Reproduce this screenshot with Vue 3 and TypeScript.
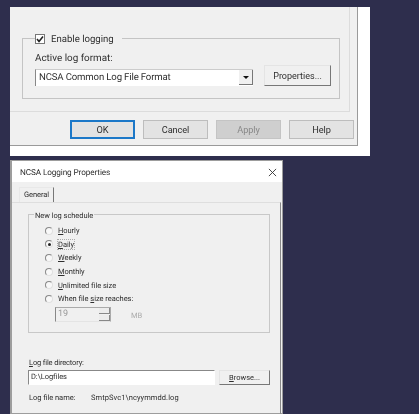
<script setup lang="ts">
interface Option {
  key: string
  rest: string
  lead?: string
  checked?: boolean
}

const schedules: Option[] = [
  { key: 'H', rest: 'ourly' },
  { key: 'D', rest: 'aily', checked: true },
  { key: 'W', rest: 'eekly' },
  { key: 'M', rest: 'onthly' },
  { key: 'U', rest: 'nlimited file size' },
  { lead: 'When file ', key: 's', rest: 'ize reaches:' }
]

const footerButtons = ['OK', 'Cancel', 'Apply', 'Help']
</script>

<template>
  <div class="page">
    <section class="site-panel">
      <div class="site-dialog">
        <div class="tab-page">
          <div class="log-group">
            <label class="enable-row">
              <span class="checkbox">
                <svg viewBox="0 0 10 10" width="10" height="10">
                  <path d="M2 5l2 2.4L8 2.4" fill="none" stroke="#222" stroke-width="1.6" />
                </svg>
              </span>
              Enable logging
            </label>
            <div class="format-label">Active log format:</div>
            <div class="format-row">
              <div class="combo">
                <span>NCSA Common Log File Format</span>
                <span class="combo-arrow"><i></i></span>
              </div>
              <button class="win-btn props-btn">Properties...</button>
            </div>
          </div>
        </div>
        <div class="footer">
          <button
            v-for="b in footerButtons"
            :key="b"
            class="win-btn foot-btn"
            :class="{ primary: b === 'OK', disabled: b === 'Apply' }"
          >{{ b }}</button>
        </div>
      </div>
    </section>

    <section class="props-dialog">
      <header class="title-bar">
        <span>NCSA Logging Properties</span>
        <svg viewBox="0 0 10 10" width="9" height="9">
          <path d="M1 1l8 8M9 1l-8 8" stroke="#333" stroke-width="1" fill="none" />
        </svg>
      </header>
      <div class="dialog-body">
        <div class="tabs"><span class="tab">General</span></div>
        <div class="general-page">
          <div class="schedule-group">
            <span class="legend">New log schedule</span>
            <div v-for="o in schedules" :key="o.key" class="radio-row">
              <span class="radio" :class="{ on: o.checked }"></span>
              <span :class="{ focused: o.checked }">{{ o.lead }}<u>{{ o.key }}</u>{{ o.rest }}</span>
            </div>
            <div class="size-row">
              <div class="spinner">
                <span class="spin-value">19</span>
                <span class="spin-btns"><i></i><i></i></span>
              </div>
              <span class="mb">MB</span>
            </div>
          </div>
          <div class="dir-label"><u>L</u>og file directory:</div>
          <div class="dir-row">
            <div class="dir-input">D:\Logfiles</div>
            <button class="win-btn browse-btn"><u>B</u>rowse...</button>
          </div>
          <div class="name-row">
            <span class="name-label">Log file name:</span>
            <span class="name-value">SmtpSvc1\ncyymmdd.log</span>
          </div>
        </div>
      </div>
    </section>
  </div>
</template>

<style>
html,
body {
  margin: 0;
  background: #2e2e4d;
}
</style>

<style scoped>
.page {
  width: 419px;
  height: 414px;
  overflow: hidden;
  background: #2e2e4d;
  box-sizing: border-box;
  padding: 7px 0 0 10px;
  font-family: Roboto, "Liberation Sans", Arial, sans-serif;
  text-rendering: geometricPrecision;
  color: #2e2e2e;
}

.site-panel {
  width: 360px;
  height: 149px;
  background: #fff;
}

.site-dialog {
  width: 348px;
  height: 139px;
  background: #f0f0f0;
  border-right: 1px solid #9a9a9a;
  border-bottom: 1px solid #9a9a9a;
  box-sizing: border-box;
  filter: blur(0.4px);
}

.tab-page {
  width: 340px;
  height: 105px;
  background: #f0f0f0;
  border-right: 1px solid #dcdcdc;
  border-bottom: 1px solid #dcdcdc;
  box-sizing: border-box;
  padding: 31px 0 0 12px;
}

.log-group {
  position: relative;
  width: 318px;
  height: 61px;
  border: 1px solid #c4c4c4;
  box-sizing: border-box;
  padding: 13px 0 0 12px;
  font-size: 9.9px;
}

.enable-row {
  position: absolute;
  top: -6px;
  left: 12px;
  display: flex;
  align-items: center;
  gap: 6px;
  padding-right: 8px;
  background: #f0f0f0;
  font-size: 9.6px;
  line-height: 14px;
}

.checkbox {
  width: 10px;
  height: 10px;
  margin-top: -2px;
  background: #fff;
  border: 1px solid #777;
  box-sizing: border-box;
  display: flex;
  align-items: center;
  justify-content: center;
}

.checkbox svg {
  flex: none;
}

.format-label {
  line-height: 13px;
}

.format-row {
  display: flex;
  align-items: center;
  gap: 11px;
  margin-top: 3px;
}

.combo {
  width: 218px;
  height: 17px;
  background: #fff;
  border-left: 1px solid #888;
  border-top: 1px solid #ccc;
  box-sizing: border-box;
  display: flex;
  align-items: center;
  justify-content: space-between;
  padding-left: 3px;
  font-size: 9.6px;
  letter-spacing: -0.15px;
}

.combo-arrow {
  width: 14px;
  height: 15px;
  background: #f0f0f0;
  border-right: 1px solid #777;
  border-bottom: 1px solid #777;
  box-sizing: border-box;
  display: flex;
  align-items: center;
  justify-content: center;
}

.combo-arrow i {
  border-left: 3px solid transparent;
  border-right: 3px solid transparent;
  border-top: 3px solid #111;
}

.win-btn {
  font: inherit;
  color: #2e2e2e;
  background: #f0f0f0;
  padding: 0;
  border: 1px solid #e4e4e4;
  border-right-color: #777;
  border-bottom-color: #777;
  box-sizing: border-box;
}

.props-btn {
  width: 67px;
  height: 21px;
  font-size: 9px;
  margin-top: -3px;
}

.footer {
  display: flex;
  gap: 8px;
  padding: 8px 0 0 60px;
}

.foot-btn {
  width: 65px;
  height: 19px;
  background: #e3e3e3;
  border: 1px solid #bdbdbd;
  font-size: 9.2px;
  letter-spacing: -0.1px;
}

.foot-btn.primary {
  border: 2px solid #1c78c8;
}

.foot-btn.disabled {
  background: #cfcfcf;
  border-color: #c4c4c4;
  color: #888;
}

.props-dialog {
  width: 273px;
  height: 254px;
  margin-top: 4px;
  background: #f0f0f0;
  border: 1px solid #9d9d9d;
  border-left-width: 2px;
  box-sizing: border-box;
  font-size: 7.5px;
  letter-spacing: -0.05px;
  filter: blur(0.4px);
}

.title-bar {
  height: 21px;
  background: #fff;
  display: flex;
  align-items: center;
  justify-content: space-between;
  padding: 2px 5px 0 8px;
  box-sizing: border-box;
  font-size: 8.2px;
  letter-spacing: -0.1px;
}

.dialog-body {
  padding: 5px 0 0 0;
}

.tabs {
  height: 15px;
  padding-left: 7px;
  display: flex;
}

.tab {
  width: 35px;
  height: 15px;
  line-height: 14px;
  text-align: center;
  background: #f0f0f0;
  border: 1px solid #e8e8e8;
  border-right-color: #777;
  border-bottom: none;
  box-sizing: border-box;
  position: relative;
  z-index: 1;
}

.general-page {
  height: 212px;
  margin-right: 1px;
  border-top: 1px solid #dedede;
  border-right: 1px solid #888;
  box-sizing: border-box;
  padding: 11px 0 0 16px;
}

.schedule-group {
  position: relative;
  width: 242px;
  height: 119px;
  border: 1px solid #c8c8c8;
  box-sizing: border-box;
  padding: 9px 0 0 16px;
}

.legend {
  position: absolute;
  top: -5px;
  left: 5px;
  padding: 0 1px;
  line-height: 11px;
  background: #f0f0f0;
}

.radio-row {
  display: flex;
  align-items: center;
  gap: 5px;
  height: 13.6px;
}

.radio {
  width: 8px;
  height: 8px;
  border-radius: 50%;
  border: 1px solid #888;
  border-right-color: #e0e0e0;
  border-bottom-color: #e0e0e0;
  background: #f8f8f8;
  box-sizing: border-box;
  position: relative;
  flex: none;
}

.radio.on::after {
  content: "";
  position: absolute;
  left: 1.5px;
  top: 1.5px;
  width: 3px;
  height: 3px;
  border-radius: 50%;
  background: #222;
}

.focused {
  outline: 1px dotted #aaa;
}

.size-row {
  display: flex;
  align-items: center;
  margin: 1px 0 0 10px;
}

.spinner {
  width: 56px;
  height: 15px;
  border: 1px solid #aaa;
  border-left-color: #888;
  border-bottom-color: #e4e4e4;
  box-sizing: border-box;
  display: flex;
  justify-content: space-between;
  color: #999;
  padding-left: 2px;
  line-height: 12px;
  font-size: 9px;
}

.spin-btns {
  width: 11px;
  display: flex;
  flex-direction: column;
  gap: 1px;
}

.spin-btns i {
  flex: 1;
  background: #ececec;
  border-right: 1px solid #888;
  border-bottom: 1px solid #888;
}

.mb {
  margin-left: 20px;
  color: #aaa;
  margin-top: 2px;
}

.dir-label {
  margin: 24px 0 0 1px;
  line-height: 11px;
  letter-spacing: -0.15px;
}

.dir-row {
  display: flex;
  gap: 4px;
  margin-top: 2px;
}

.dir-input {
  width: 187px;
  height: 15px;
  background: #fff;
  border: 1px solid #888;
  border-right-color: #fff;
  border-bottom-color: #fff;
  box-sizing: border-box;
  padding-left: 2px;
  line-height: 12px;
}

.browse-btn {
  width: 51px;
  height: 15px;
  font-size: 7.5px;
}

.name-row {
  display: flex;
  margin: 7px 0 0 1px;
  line-height: 11px;
}

.name-label {
  width: 62px;
}

.name-value {
  letter-spacing: 0.08px;
}
</style>
